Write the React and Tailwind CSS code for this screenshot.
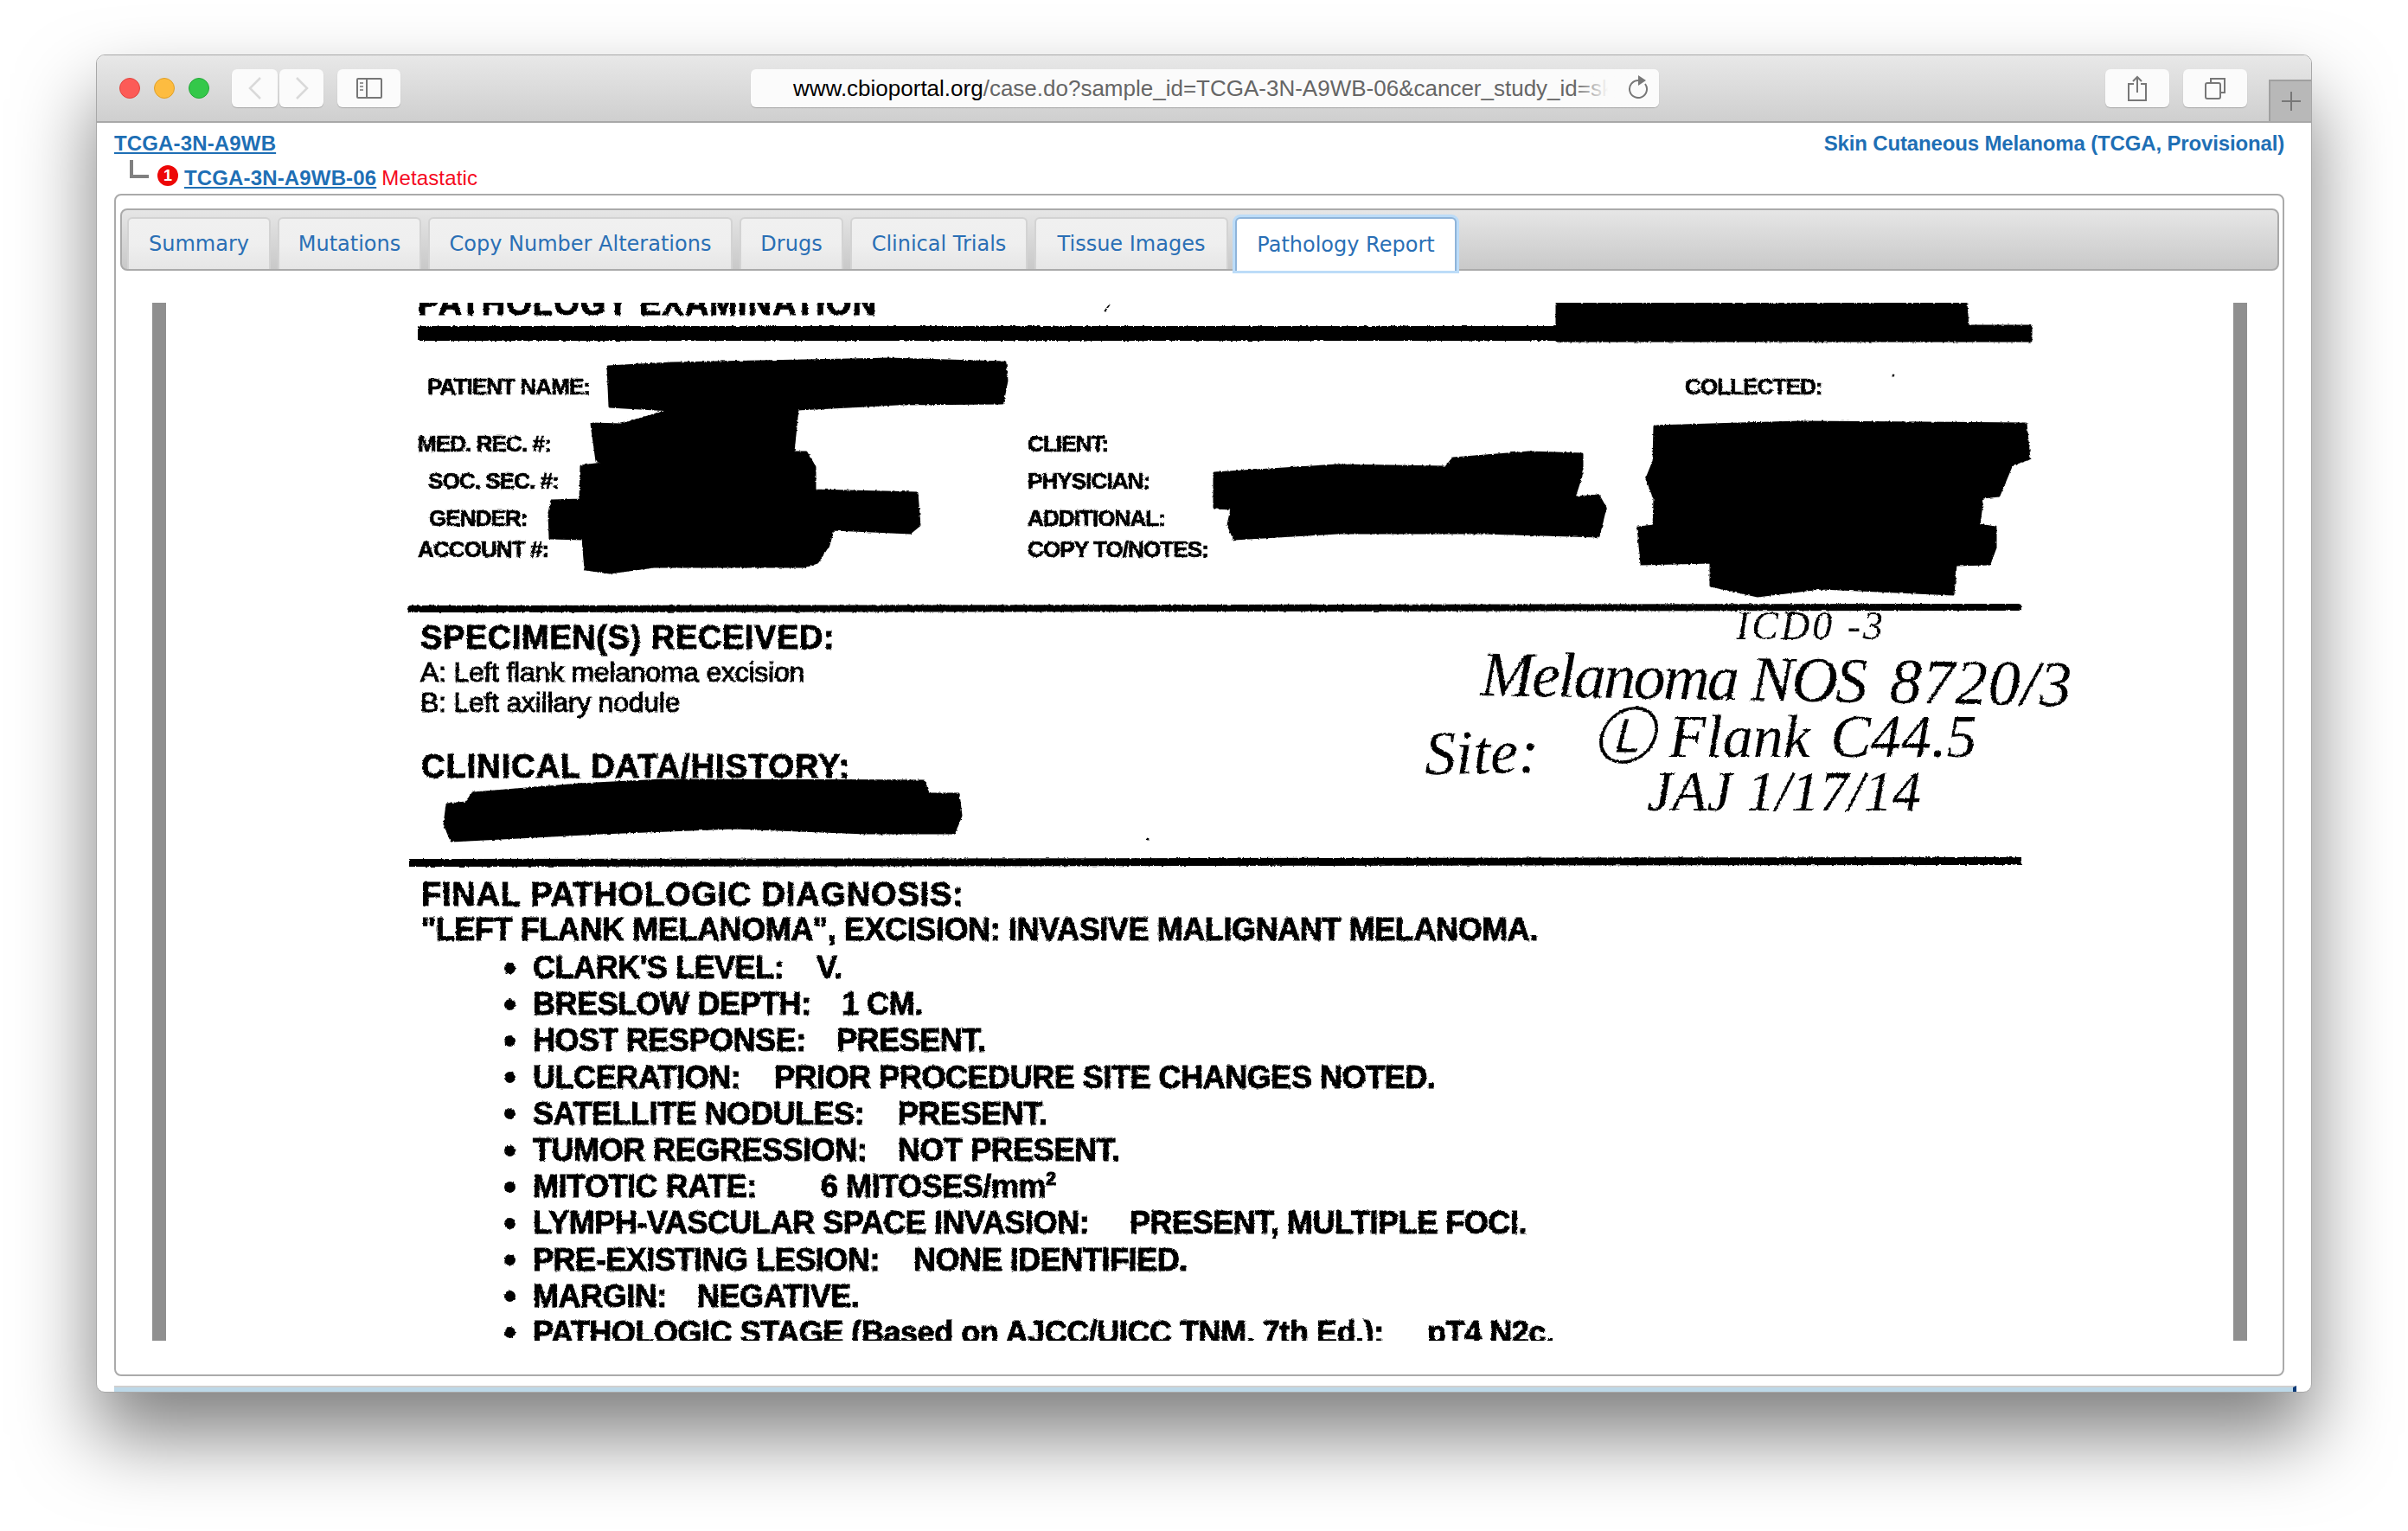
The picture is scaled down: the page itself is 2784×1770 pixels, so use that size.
import React from 'react';

const TABS = [
  { label: 'Summary', width: 'w-[166px]' },
  { label: 'Mutations', width: 'w-[166px]' },
  { label: 'Copy Number Alterations', width: 'w-[352px]' },
  { label: 'Drugs', width: 'w-[120px]' },
  { label: 'Clinical Trials', width: 'w-[205px]' },
  { label: 'Tissue Images', width: 'w-[224px]' },
];

const FINDINGS = [
  { label: "CLARK'S LEVEL:", value: 'V.', width: 'w-[328px]' },
  { label: 'BRESLOW DEPTH:', value: '1 CM.', width: 'w-[357px]' },
  { label: 'HOST RESPONSE:', value: 'PRESENT.', width: 'w-[351px]' },
  { label: 'ULCERATION:', value: 'PRIOR PROCEDURE SITE CHANGES NOTED.', width: 'w-[279px]' },
  { label: 'SATELLITE NODULES:', value: 'PRESENT.', width: 'w-[422px]' },
  { label: 'TUMOR REGRESSION:', value: 'NOT PRESENT.', width: 'w-[422px]' },
  { label: 'MITOTIC RATE:', value: <>6 MITOSES/mm<sup className="text-[22px] leading-none top-[-14px]">2</sup></>, width: 'w-[333px]' },
  { label: 'LYMPH-VASCULAR SPACE INVASION:', value: 'PRESENT, MULTIPLE FOCI.', width: 'w-[690px]' },
  { label: 'PRE-EXISTING LESION:', value: 'NONE IDENTIFIED.', width: 'w-[440px]' },
  { label: 'MARGIN:', value: 'NEGATIVE.', width: 'w-[190px]' },
  { label: 'PATHOLOGIC STAGE (Based on AJCC/UICC TNM, 7th Ed.):', value: 'pT4 N2c.', width: 'w-[1034px]' },
];

// marker strokes over the scanned form, in page coordinates
const REDACTIONS = [
  'M1800 350 L2273 350 L2275 377 L2348 377 L2348 394 L1800 394 Z',
  'M703 424 L777 420 L930 417 L1027 415 L1162 419 L1164 440 L1159 466 L1037 467 L922 473 L917 523 L932 523 L942 540 L942 567 L1060 570 L1063 607 L1052 616 L963 612 L958 630 L945 650 L930 655 L756 655 L705 662 L677 658 L674 623 L636 622 L635 593 L638 579 L671 578 L672 539 L705 535 L690 533 L684 490 L718 491 L777 474 L705 470 Z',
  'M1404 547 L1546 538 L1672 540 L1680 530 L1768 523 L1829 525 L1829 547 L1820 575 L1848 573 L1856 587 L1848 620 L1714 616 L1546 616 L1427 623 L1420 607 L1424 588 L1404 587 Z',
  'M1913 493 L2082 488 L2342 490 L2346 530 L2326 537 L2311 573 L2292 575 L2288 607 L2307 610 L2307 633 L2300 652 L2261 653 L2258 687 L2105 680 L2032 689 L1978 677 L1978 650 L1898 652 L1894 610 L1912 608 L1913 577 L1904 553 L1912 533 Z',
  'M517 930 L539 928 L547 917 L670 907 L767 902 L1068 903 L1073 918 L1108 918 L1111 943 L1103 963 L1001 963 L848 957 L695 963 L522 972 L514 953 Z',
];

function Field({ left, right, rowClass }) {
  return (
    <div className={`grid grid-cols-[996px_1fr] h-[20px] text-[26px] leading-[20px] font-bold tracking-[-0.9px] [-webkit-text-stroke:0.7px_black] ${rowClass}`}>
      <div className={left.pad}>{left.text}</div>
      {right && <div className={right.pad}>{right.text}</div>}
    </div>
  );
}

function ScanPage() {
  return (
    <div className="relative w-[2390px] h-[1200px] overflow-hidden bg-white">
      <svg className="absolute" width="0" height="0">
        <filter id="scan-edge" x="0" y="0" width="100%" height="100%">
          <feTurbulence type="fractalNoise" baseFrequency="0.35" numOctaves="2" seed="4" />
          <feDisplacementMap in="SourceGraphic" scale="3" xChannelSelector="R" yChannelSelector="G" />
        </filter>
      </svg>

      <div className="flow-root relative h-[1200px] text-black font-['Liberation_Sans',Arial,sans-serif] [filter:url(#scan-edge)]">
        <div className="-mt-[16px] ml-[291px] text-[38px] leading-[34px] font-bold tracking-[1.1px] [-webkit-text-stroke:1px_black]">PATHOLOGY EXAMINATION</div>
        <div className="mt-[9px] ml-[291px] w-[1865px] h-[17px] bg-black"></div>

        <Field rowClass="mt-[43px]" left={{ text: 'PATIENT NAME:', pad: 'pl-[302px]' }} right={{ text: 'COLLECTED:', pad: 'pl-[760px]' }} />
        <Field rowClass="mt-[46px]" left={{ text: 'MED. REC. #:', pad: 'pl-[291px]' }} right={{ text: 'CLIENT:', pad: 'pl-[0px]' }} />
        <Field rowClass="mt-[23px]" left={{ text: 'SOC. SEC. #:', pad: 'pl-[303px]' }} right={{ text: 'PHYSICIAN:', pad: 'pl-[0px]' }} />
        <Field rowClass="mt-[23px]" left={{ text: 'GENDER:', pad: 'pl-[304px]' }} right={{ text: 'ADDITIONAL:', pad: 'pl-[0px]' }} />
        <Field rowClass="mt-[16px]" left={{ text: 'ACCOUNT #:', pad: 'pl-[291px]' }} right={{ text: 'COPY TO/NOTES:', pad: 'pl-[0px]' }} />

        <div className="mt-[54px] ml-[279px] w-[1866px] h-[8px] rounded-full bg-black -rotate-[0.06deg]"></div>

        <div className="mt-[11px] ml-[294px] text-[38px] leading-[38px] font-bold tracking-[0.6px] [-webkit-text-stroke:1px_black]">SPECIMEN(S) RECEIVED:</div>
        <div className="mt-[6px] ml-[294px] text-[32px] leading-[30px] tracking-[-0.25px] [-webkit-text-stroke:1px_black]">A: Left flank melanoma excision</div>
        <div className="mt-[5px] ml-[294px] text-[32px] leading-[30px] tracking-[-0.25px] [-webkit-text-stroke:1px_black]">B: Left axillary nodule</div>
        <div className="mt-[40px] ml-[295px] text-[38px] leading-[38px] font-bold tracking-[1px] [-webkit-text-stroke:1px_black]">CLINICAL DATA/HISTORY:</div>

        <div className="mt-[87px] ml-[281px] w-[1864px] h-[9px] bg-black -rotate-[0.06deg]"></div>

        <div className="mt-[14px] ml-[295px] text-[38px] leading-[38px] font-bold tracking-[0.8px] [-webkit-text-stroke:1px_black]">FINAL PATHOLOGIC DIAGNOSIS:</div>
        <div className="mt-[4px] ml-[295px] text-[36px] leading-[36px] font-bold tracking-[-0.4px] whitespace-nowrap [-webkit-text-stroke:1px_black]">"LEFT FLANK MELANOMA", EXCISION: INVASIVE MALIGNANT MELANOMA.</div>

        <div className="mt-[5px] ml-[391px]">
          {FINDINGS.map((row) => (
            <div key={row.label} className="flex items-center h-[42.2px] text-[36px] leading-[36px] font-bold tracking-[-0.45px] [-webkit-text-stroke:1px_black]">
              <span className="w-[13px] h-[13px] rounded-full bg-black shrink-0"></span>
              <span className={`ml-[20px] whitespace-nowrap ${row.width}`}>{row.label}</span>
              <span className="whitespace-nowrap">{row.value}</span>
            </div>
          ))}
        </div>

        <svg className="absolute left-0 top-0" width="2390" height="1200" viewBox="192 350 2390 1200">
          {REDACTIONS.map((d) => (
            <path key={d} d={d} fill="#000" stroke="#000" strokeWidth="3" strokeLinejoin="round" />
          ))}
          <path d="M1277 360 L1283 352" stroke="#000" strokeWidth="1.5" />
          <circle cx="2189" cy="434" r="1.5" fill="#000" />
          <circle cx="1327" cy="970" r="1.5" fill="#000" />
        </svg>

        {/* handwritten coding notes */}
        <div className="absolute left-[1815px] top-[354px] text-[46px] leading-[40px] font-['Liberation_Serif',serif] italic whitespace-nowrap tracking-[3px]">ICD0 -3</div>
        <div className="absolute left-[1520px] top-[407px] text-[74px] leading-[56px] font-['Liberation_Serif',serif] italic whitespace-nowrap tracking-[-2.5px] rotate-[1deg]">Melanoma NOS <span className="ml-[12px] tracking-[1px]">8720/3</span></div>
        <div className="absolute left-[1455px] top-[492px] text-[72px] leading-[56px] font-['Liberation_Serif',serif] italic whitespace-nowrap -rotate-[1deg]">Site:</div>
        <div className="absolute left-[1650px] top-[474px] text-[70px] leading-[56px] font-['Liberation_Serif',serif] italic whitespace-nowrap">Ⓛ Flank <span className="ml-[6px]">C44.5</span></div>
        <div className="absolute left-[1712px] top-[537px] text-[66px] leading-[56px] font-['Liberation_Serif',serif] italic whitespace-nowrap">JAJ 1/17/14</div>
      </div>
    </div>
  );
}

function ToolbarButton({ className, children }) {
  return (
    <div className={`h-[44px] flex items-center justify-center rounded-[6px] bg-[#fbfbfb] shadow-[0_1px_1px_rgba(0,0,0,0.2)] ${className}`}>
      {children}
    </div>
  );
}

function TitleBar() {
  return (
    <div className="relative flex shrink-0 h-[78px] items-start pt-[16px] pl-[26px] border-b-2 border-[#a8a8a8] bg-gradient-to-b from-[#e8e8e8] to-[#cfcfcf]">
      <div className="flex mt-[10px] gap-[16px]">
        <span className="w-[24px] h-[24px] rounded-full bg-[#fc5b57] border border-[#e2463f]"></span>
        <span className="w-[24px] h-[24px] rounded-full bg-[#fdbc40] border border-[#e0a028]"></span>
        <span className="w-[24px] h-[24px] rounded-full bg-[#34c84a] border border-[#24a938]"></span>
      </div>

      <ToolbarButton className="ml-[26px] w-[53px]">
        <svg width="18" height="26" viewBox="0 0 18 26" fill="none" stroke="#d9d9d9" strokeWidth="2.5"><path d="M15 1 L3 13 L15 25" /></svg>
      </ToolbarButton>
      <ToolbarButton className="ml-[2px] w-[51px]">
        <svg width="18" height="26" viewBox="0 0 18 26" fill="none" stroke="#d9d9d9" strokeWidth="2.5"><path d="M3 1 L15 13 L3 25" /></svg>
      </ToolbarButton>
      <ToolbarButton className="ml-[16px] w-[73px]">
        <svg width="30" height="24" viewBox="0 0 30 24" fill="none" stroke="#777" strokeWidth="2">
          <rect x="1" y="1" width="28" height="22" rx="1" />
          <path d="M12 1 V23" />
          <path d="M4 6 H8 M4 10 H8 M4 14 H8" strokeWidth="1.5" />
        </svg>
      </ToolbarButton>

      <div className="relative ml-[405px] w-[1050px] h-[44px] flex items-center rounded-[6px] bg-[#fbfbfb] shadow-[0_1px_1px_rgba(0,0,0,0.2)] overflow-hidden font-['Liberation_Sans',Arial,sans-serif] text-[26px]">
        <div className="pl-[49px] whitespace-nowrap text-[#666]">
          <span className="text-black">www.cbioportal.org</span>/case.do?sample_id=TCGA-3N-A9WB-06&amp;cancer_study_id=skcm_tcga
        </div>
        <div className="absolute right-0 top-0 h-full w-[98px] bg-gradient-to-r from-transparent via-[#fbfbfb] via-40% to-[#fbfbfb]"></div>
        <svg className="absolute right-[12px] top-[6px]" width="24" height="28" viewBox="0 0 24 28" fill="none" stroke="#777" strokeWidth="2">
          <path d="M12 7 A10 10 0 1 0 20 11" />
          <path d="M12 1 L21 7 L12 13 Z" fill="#777" stroke="none" />
        </svg>
      </div>

      <ToolbarButton className="ml-[516px] w-[74px]">
        <svg width="24" height="30" viewBox="0 0 24 30" fill="none" stroke="#777" strokeWidth="2">
          <path d="M8 10 H2 V29 H22 V10 H16" />
          <path d="M12 20 V2 M7 7 L12 2 L17 7" />
        </svg>
      </ToolbarButton>
      <ToolbarButton className="ml-[16px] w-[74px]">
        <svg width="26" height="26" viewBox="0 0 26 26" fill="none" stroke="#777" strokeWidth="2">
          <rect x="2" y="7" width="17" height="18" rx="2" />
          <path d="M8 6 V2 H24 V18 H20" />
        </svg>
      </ToolbarButton>

      <div className="absolute right-0 bottom-0 w-[49px] h-[48px] flex items-center justify-center border-l-2 border-t-2 border-[#a0a0a0] bg-[#b8b8b8]">
        <svg width="24" height="24" viewBox="0 0 24 24" stroke="#777" strokeWidth="2"><path d="M12 1 V23 M1 12 H23" /></svg>
      </div>
    </div>
  );
}

export default function App() {
  return (
    <div className="w-[2784px] h-[1770px] pt-[63px] pl-[111px] bg-white overflow-hidden">
      <div className="flex flex-col w-[2562px] h-[1547px] rounded-t-[10px] rounded-b-[10px] border border-[#a8a8a8] bg-white shadow-[0_50px_90px_rgba(0,0,0,0.5)] overflow-hidden">
        <TitleBar />

        <div className="shrink-0 font-['Liberation_Sans',Arial,sans-serif] text-[24px] leading-[30px]">
          <div className="flex justify-between pt-[9px] pl-[20px] pr-[31px]">
            <a className="font-bold text-[#1e6fb5] underline tracking-[0.15px]">TCGA-3N-A9WB</a>
            <span className="font-bold text-[#1e6fb5] tracking-[-0.15px]">Skin Cutaneous Melanoma (TCGA, Provisional)</span>
          </div>
          <div className="flex items-center mt-[10px] pl-[38px] pb-[3px]">
            <span className="-mt-[21px] w-[22px] h-[21px] border-l-4 border-b-4 border-[#808080]"></span>
            <span className="ml-[10px] -translate-y-[3px] w-[24px] h-[24px] rounded-full bg-[#ed0707] text-white text-[18px] leading-[24px] font-bold text-center">1</span>
            <a className="ml-[7px] font-bold text-[#1e6fb5] underline tracking-[0.15px]">TCGA-3N-A9WB-06</a>
            <span className="ml-[6px] text-[#f50a1e] tracking-[0.15px]">Metastatic</span>
          </div>
        </div>

        <div className="ml-[20px] w-[2509px] h-[1367px] shrink-0 rounded-[8px] border-2 border-[#aaa] px-[5px] pt-[15px]">
          <div className="flex gap-[8px] w-[2496px] h-[72px] pl-[6px] pt-[8px] rounded-[8px] border-2 border-[#aaa] bg-gradient-to-b from-[#e6e6e6] to-[#c9c9c9] font-['DejaVu_Sans',Verdana,sans-serif] text-[24px] text-[#2a6fb5]">
            {TABS.map((tab) => (
              <div key={tab.label} className={`h-[60px] flex items-center justify-center whitespace-nowrap rounded-t-[6px] border-2 border-b-0 border-[#d3d3d3] bg-gradient-to-b from-[#f0f0f0] via-[#efefef] to-[#e6e6e6] ${tab.width}`}>
                {tab.label}
              </div>
            ))}
            <div className="relative h-[62px] w-[256px] flex items-center justify-center whitespace-nowrap rounded-t-[6px] border-2 border-[#8fb4d9] border-b-0 bg-white shadow-[0_0_0_3px_#bcdcf8]">
              Pathology Report
            </div>
          </div>

          <div className="flex mt-[37px] ml-[37px] w-[2422px]">
            <div className="w-[16px] h-[1200px] bg-[#8f8f8f]"></div>
            <ScanPage />
            <div className="w-[16px] h-[1200px] bg-[#8f8f8f]"></div>
          </div>
        </div>

        <div className="mt-[11px] ml-[20px] w-[2519px] h-[5px] shrink-0 box-content border-t-2 border-[#cfcfcf] border-r-[4px] border-r-[#0d3a78] bg-[#bcd8e8]"></div>
      </div>
    </div>
  );
}
